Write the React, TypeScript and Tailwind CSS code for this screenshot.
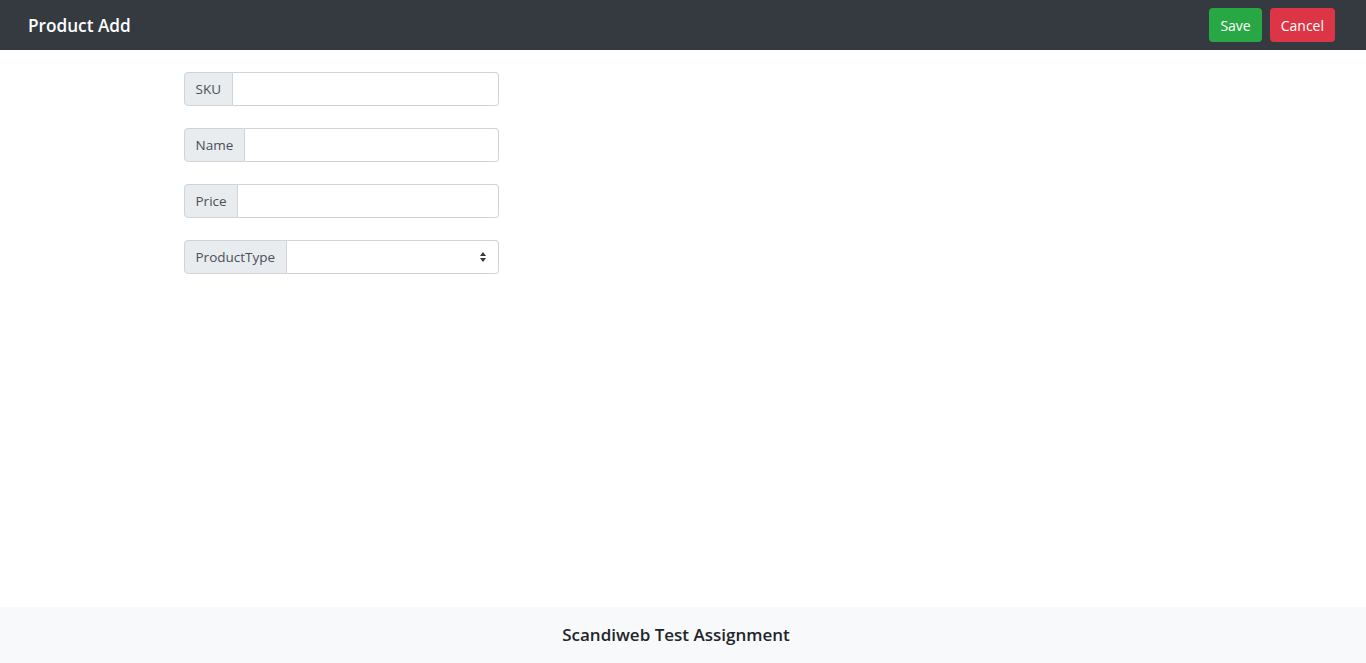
import React from "react";

const font = { fontFamily: '"Open Sans", "Noto Sans", sans-serif' };

function Field({ label, select }: { label: string; select?: boolean }) {
  return (
    <div className="flex h-[34px] w-[315px]">
      <span className="flex items-center px-[10.5px] bg-[#e9ecef] border border-[#ced4da] rounded-l-[4px] text-[13.5px] text-[#495057] whitespace-nowrap">
        {label}
      </span>
      <div className="relative flex-1 border border-l-0 border-[#ced4da] rounded-r-[4px] bg-white">
        {select && (
          <svg className="absolute right-[12px] top-[11px]" width="6" height="10" viewBox="0 0 6 10">
            <path d="M3 0 L6 4 L0 4 Z" fill="#343a40" />
            <path d="M0 6 L6 6 L3 10 Z" fill="#343a40" />
          </svg>
        )}
      </div>
    </div>
  );
}

export default function App() {
  return (
    <div className="min-h-screen flex flex-col bg-white" style={font}>
      <header className="h-[50px] bg-[#343a40] flex items-center justify-between pl-[28px] pr-[31px]">
        <h1 className="text-white text-[17.2px] font-semibold pt-[1px]">Product Add</h1>
        <div className="flex gap-[8px]">
          <button className="h-[34px] px-[11px] bg-[#28a745] text-white text-[14px] rounded-[4px]">Save</button>
          <button className="h-[34px] px-[11px] bg-[#dc3545] text-white text-[14px] rounded-[4px]">Cancel</button>
        </div>
      </header>
      <main className="flex-1 pt-[22px] pl-[184px] flex flex-col gap-[22px]">
        <Field label="SKU" />
        <Field label="Name" />
        <Field label="Price" />
        <Field label="ProductType" select />
      </main>
      <footer className="h-[56px] bg-[#f8f9fa] flex items-center justify-center pr-[14px]">
        <span className="text-[17px] font-[550] text-[#212529]">Scandiweb Test Assignment</span>
      </footer>
    </div>
  );
}
